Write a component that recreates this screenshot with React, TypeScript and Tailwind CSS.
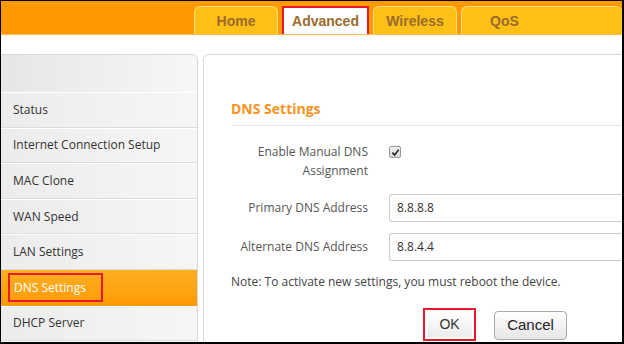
const tabs = [
  { label: "Home", active: false },
  { label: "Advanced", active: true },
  { label: "Wireless", active: false },
];

const menu = [
  "Status",
  "Internet Connection Setup",
  "MAC Clone",
  "WAN Speed",
  "LAN Settings",
  "DNS Settings",
  "DHCP Server",
];

function Tab({ label, active }: { label: string; active: boolean }) {
  if (active) {
    return (
      <div className="flex h-[28px] w-[87px] items-center justify-center border-2 border-b-0 border-[#e8192c] bg-white pt-[1px] text-[14px] font-bold text-[#9b6a2c]">
        {label}
      </div>
    );
  }
  return (
    <div className="flex h-[28px] w-[84px] shrink-0 items-center justify-center rounded-t-[6px] border border-b-0 border-[#ffdd80] bg-[#fcc016] pt-[1px] text-[14px] font-bold text-[#9b6a2c]">
      {label}
    </div>
  );
}

function MenuItem({ label, active }: { label: string; active: boolean }) {
  if (active) {
    return (
      <div className="flex h-[35.6px] items-center bg-gradient-to-b from-[#ffb020] to-[#ff9900] pl-[7px]">
        <span className="flex h-[29px] w-[95px] items-center border-2 border-[#e8192c] pl-[4px] text-[12px] text-white">
          {label}
        </span>
      </div>
    );
  }
  return (
    <div className="flex h-[35.6px] items-center border-b border-[#dcdcdc] border-t border-t-white bg-gradient-to-r from-[#ececec] to-[#f6f6f6] pl-[12px] text-[12px] text-[#333]">
      {label}
    </div>
  );
}

export default function App() {
  return (
    <div
      className="flex h-[344px] w-[624px] flex-col overflow-hidden border-t border-l border-r-2 border-b-2 border-black bg-white"
      style={{ fontFamily: '"Open Sans", "DejaVu Sans", sans-serif' }}
    >
      <header
        className="flex h-[34px] shrink-0 items-end gap-[4px] border-b border-[#ffb84d] bg-[#ff9900] pl-[193px]"
        style={{ fontFamily: '"Liberation Sans", Arial, sans-serif' }}
      >
        {tabs.map((t) => (
          <Tab key={t.label} label={t.label} active={t.active} />
        ))}
        <div className="flex h-[28px] flex-1 items-center rounded-t-[6px] border border-r-0 border-b-0 border-[#ffdd80] bg-[#fcc016] pl-[28px] pt-[1px] text-[14px] font-bold text-[#9b6a2c]">
          QoS
        </div>
      </header>

      <div className="mt-[19px] flex flex-1 gap-[5px]">
        <aside className="flex w-[197px] shrink-0 flex-col rounded-tr-[6px] border-t border-r border-[#d8d8d8]">
          <div className="h-[37px] shrink-0 rounded-tr-[6px] bg-gradient-to-r from-[#e6e6e6] to-[#f7f7f7]" />
          {menu.map((m) => (
            <MenuItem key={m} label={m} active={m === "DNS Settings"} />
          ))}
        </aside>

        <main className="flex-1 rounded-tl-[6px] border-t border-l border-[#d8d8d8] pl-[27px] pt-[45px]">
          <h2 className="border-b border-[#e6e6e6] pb-[7px] text-[14px] font-bold leading-[18px] text-[#f7931e]">
            DNS Settings
          </h2>

          <div className="mt-[16px] flex text-[12px] text-[#555]">
            <div className="w-[137px] text-right leading-[19px]">
              Enable Manual DNS
              <br />
              Assignment
            </div>
            <div className="ml-[21px] pt-[4px]">
              <div className="flex h-[12px] w-[12px] items-center justify-center rounded-[2px] border border-[#999] bg-gradient-to-b from-[#f4f4f4] to-[#d8d8d8]">
                <svg viewBox="0 0 10 10" className="h-[9px] w-[9px]">
                  <path d="M1.5 5.2 L4 7.8 L8.6 1.8" fill="none" stroke="#222" strokeWidth="1.8" />
                </svg>
              </div>
            </div>
          </div>

          <div className="mt-[14px] flex items-center text-[12px] text-[#555]">
            <div className="w-[137px] text-right">Primary DNS Address</div>
            <div className="ml-[21px] flex h-[28px] flex-1 items-center rounded-l-[3px] border border-r-0 border-[#ccc] pl-[7px] text-[#333]">
              8.8.8.8
            </div>
          </div>

          <div className="mt-[11px] flex items-center text-[12px] text-[#555]">
            <div className="w-[137px] text-right">Alternate DNS Address</div>
            <div className="ml-[21px] flex h-[28px] flex-1 items-center rounded-l-[3px] border border-r-0 border-[#ccc] pl-[7px] text-[#333]">
              8.8.4.4
            </div>
          </div>

          <p className="mt-[12px] text-[12px] text-[#444]">
            Note: To activate new settings, you must reboot the device.
          </p>

          <div
            className="mt-[17px] flex items-start pl-[192px]"
            style={{ fontFamily: '"Liberation Sans", Arial, sans-serif' }}
          >
            <div className="flex h-[33px] w-[53px] items-center justify-center border-2 border-[#e8192c] p-[2px]">
              <div className="flex h-full w-full items-center justify-center bg-gradient-to-b from-white to-[#ececec] text-[14px] text-[#333]">
                OK
              </div>
            </div>
            <button className="ml-[18px] mt-[3px] h-[29px] w-[73px] rounded-[4px] border border-[#aaa] bg-gradient-to-b from-white to-[#e6e6e6] text-[15px] text-[#222]">
              Cancel
            </button>
          </div>
        </main>
      </div>
    </div>
  );
}
